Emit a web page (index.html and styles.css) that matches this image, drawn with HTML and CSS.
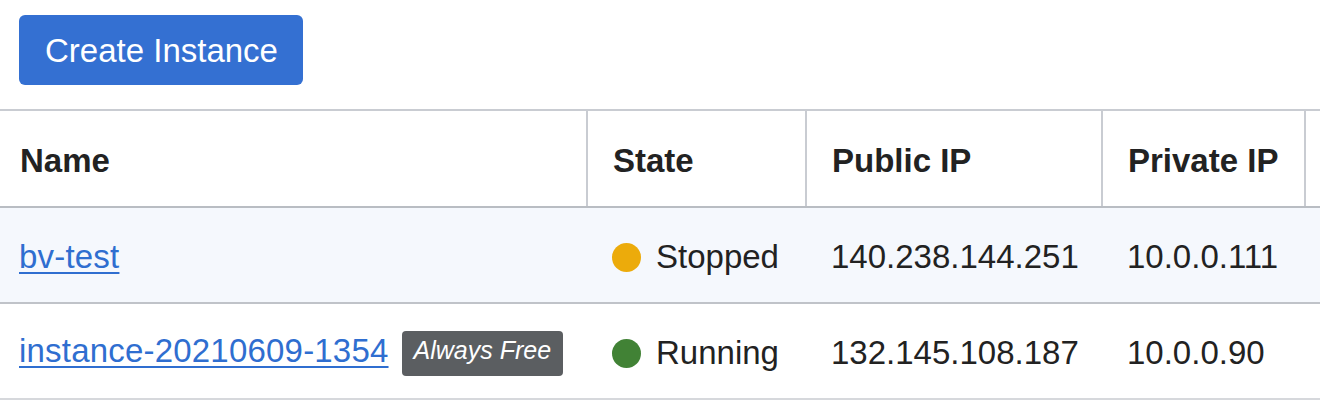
FILE: index.html
```html
<!DOCTYPE html>
<html lang="en">
<head>
    <meta charset="UTF-8">
    <meta name="viewport" content="width=device-width, initial-scale=1.0">
    <title>Instances</title>
    <link rel="stylesheet" href="styles.css">
</head>
<body>

    <div class="toolbar">
        <button class="create-btn">Create Instance</button>
    </div>

    <div class="table-wrap">
        <table class="instances">
            <colgroup>
                <col class="col-name">
                <col class="col-state">
                <col class="col-public">
                <col class="col-private">
                <col class="col-extra">
            </colgroup>
            <thead>
                <tr>
                    <th>Name</th>
                    <th>State</th>
                    <th>Public IP</th>
                    <th>Private IP</th>
                    <th></th>
                </tr>
            </thead>
            <tbody>
                <tr class="shaded">
                    <td><a href="#">bv-test</a></td>
                    <td><span class="dot stopped"></span>Stopped</td>
                    <td>140.238.144.251</td>
                    <td>10.0.0.111</td>
                    <td></td>
                </tr>
                <tr>
                    <td><a href="#">instance-20210609-1354</a><span class="badge">Always Free</span></td>
                    <td><span class="dot running"></span>Running</td>
                    <td>132.145.108.187</td>
                    <td>10.0.0.90</td>
                    <td></td>
                </tr>
            </tbody>
        </table>
    </div>

</body>
</html>
```

FILE: styles.css
```css
body {
    font-family: "Liberation Sans", Arial, sans-serif;
    margin: 0;
    padding: 0;
    background-color: #fff;
    color: #222;
}

.toolbar {
    padding: 15px 19px 24px;
}

.create-btn {
    height: 70px;
    width: 284px;
    padding: 2px 0 0 26px;
    text-align: left;
    font-family: inherit;
    font-size: 33px;
    color: white;
    background-color: #3470d2;
    border: none;
    border-radius: 6px;
    cursor: pointer;
}

.table-wrap {
    width: 100%;
    overflow: hidden;
}

.instances {
    border-collapse: collapse;
    table-layout: fixed;
    width: 1500px;
    font-size: 33px;
}

.col-name { width: 587px; }
.col-state { width: 219px; }
.col-public { width: 296px; }
.col-private { width: 203px; }
.col-extra { width: 195px; }

th {
    height: 91px;
    padding: 4px 0 0 25px;
    text-align: left;
    font-weight: bold;
    border-top: 2px solid #c9ccd2;
    border-bottom: 2px solid #b9bdc3;
    border-left: 2px solid #c9ccd2;
}

th:first-child {
    border-left: none;
    padding-left: 20px;
}

td {
    height: 90px;
    padding: 4px 0 0 25px;
    border-bottom: 2px solid #c0c3c9;
    white-space: nowrap;
}

td:first-child {
    padding-left: 19px;
}

tbody tr:last-child td {
    border-bottom-color: #d6d8dc;
}

.shaded td {
    background-color: #f5f8fd;
}

a {
    color: #2f6ed0;
    letter-spacing: 0.2px;
    text-decoration: underline;
    text-decoration-thickness: 2px;
    text-underline-offset: 4px;
}

.badge {
    display: inline-block;
    margin-left: 13px;
    padding: 5px 12px 11px;
    font-size: 25px;
    font-style: italic;
    color: white;
    background-color: #5b5e61;
    border-radius: 4px;
    vertical-align: 3px;
}

.dot {
    display: inline-block;
    width: 29px;
    height: 29px;
    margin-right: 15px;
    border-radius: 50%;
    vertical-align: -4px;
}

.stopped { background-color: #ecab0b; }
.running { background-color: #418235; }
```
